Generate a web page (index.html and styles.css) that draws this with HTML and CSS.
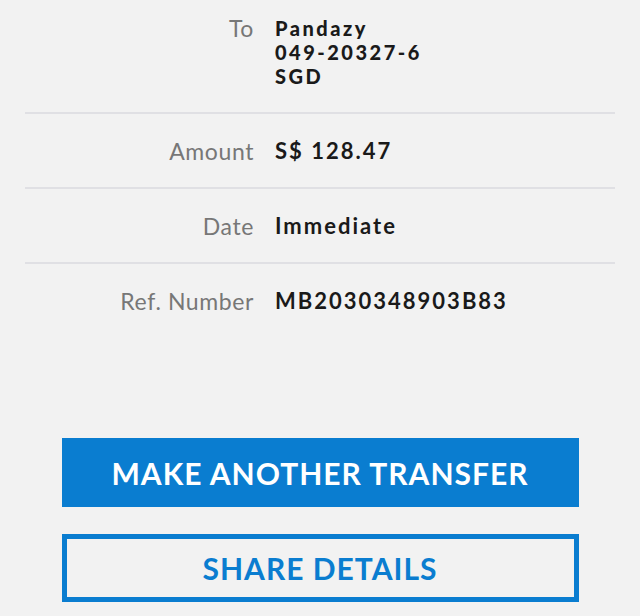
FILE: index.html
```html
<!DOCTYPE html>
<html lang="en">

<head>
    <meta charset="UTF-8">
    <meta name="viewport" content="width=device-width, initial-scale=1.0">
    <title>Transfer Details</title>
    <link rel="stylesheet" href="styles.css">
</head>

<body>

    <section class="details">
        <div class="row first">
            <div class="label">To</div>
            <div class="value multi">
                Pandazy<br>
                049-20327-6<br>
                SGD
            </div>
        </div>
        <div class="row">
            <div class="label">Amount</div>
            <div class="value">S$ 128.47</div>
        </div>
        <div class="row">
            <div class="label">Date</div>
            <div class="value">Immediate</div>
        </div>
        <div class="row last">
            <div class="label">Ref. Number</div>
            <div class="value">MB2030348903B83</div>
        </div>
    </section>

    <div class="actions">
        <button type="button" class="btn primary">MAKE ANOTHER TRANSFER</button>
        <button type="button" class="btn outline">SHARE DETAILS</button>
    </div>

</body>

</html>
```

FILE: styles.css
```css
body {
    font-family: "Lato", "Liberation Sans", sans-serif;
    background-color: #f2f2f2;
    color: #1a1a1a;
    margin: 0;
    padding: 0;
}

.details {
    margin: 0 25px;
}

.row {
    display: flex;
    align-items: flex-start;
    padding: 25px 0 24px;
    border-bottom: 2px solid #e0e0e4;
}

.row.first {
    padding-top: 16px;
}

.row.last {
    border-bottom: none;
}

.label {
    width: 229px;
    text-align: right;
    color: #777;
    font-size: 23px;
    letter-spacing: 0.6px;
    line-height: 24px;
}

.value {
    margin-left: 21px;
    font-size: 22px;
    font-weight: 700;
    letter-spacing: 2px;
    line-height: 24px;
}

/* stacked lines sit 24px apart, so keep the glyph box inside that */
.value.multi {
    font-size: 20px;
    letter-spacing: 2.5px;
    font-weight: 900;
}

.actions {
    display: flex;
    flex-direction: column;
    align-items: center;
    gap: 27px;
    margin-top: 101px;
}

.btn {
    width: 517px;
    height: 69px;
    font-family: "Lato", "Liberation Sans", sans-serif;
    font-size: 30px;
    font-weight: 700;
    letter-spacing: 1px;
    border: none;
    padding: 0;
    cursor: pointer;
}

.primary {
    background-color: #0a7dd0;
    color: white;
}

.outline {
    height: 68px;
    background-color: #f2f2f2;
    color: #0a7dd0;
    border: 5px solid #0a7dd0;
}
```
